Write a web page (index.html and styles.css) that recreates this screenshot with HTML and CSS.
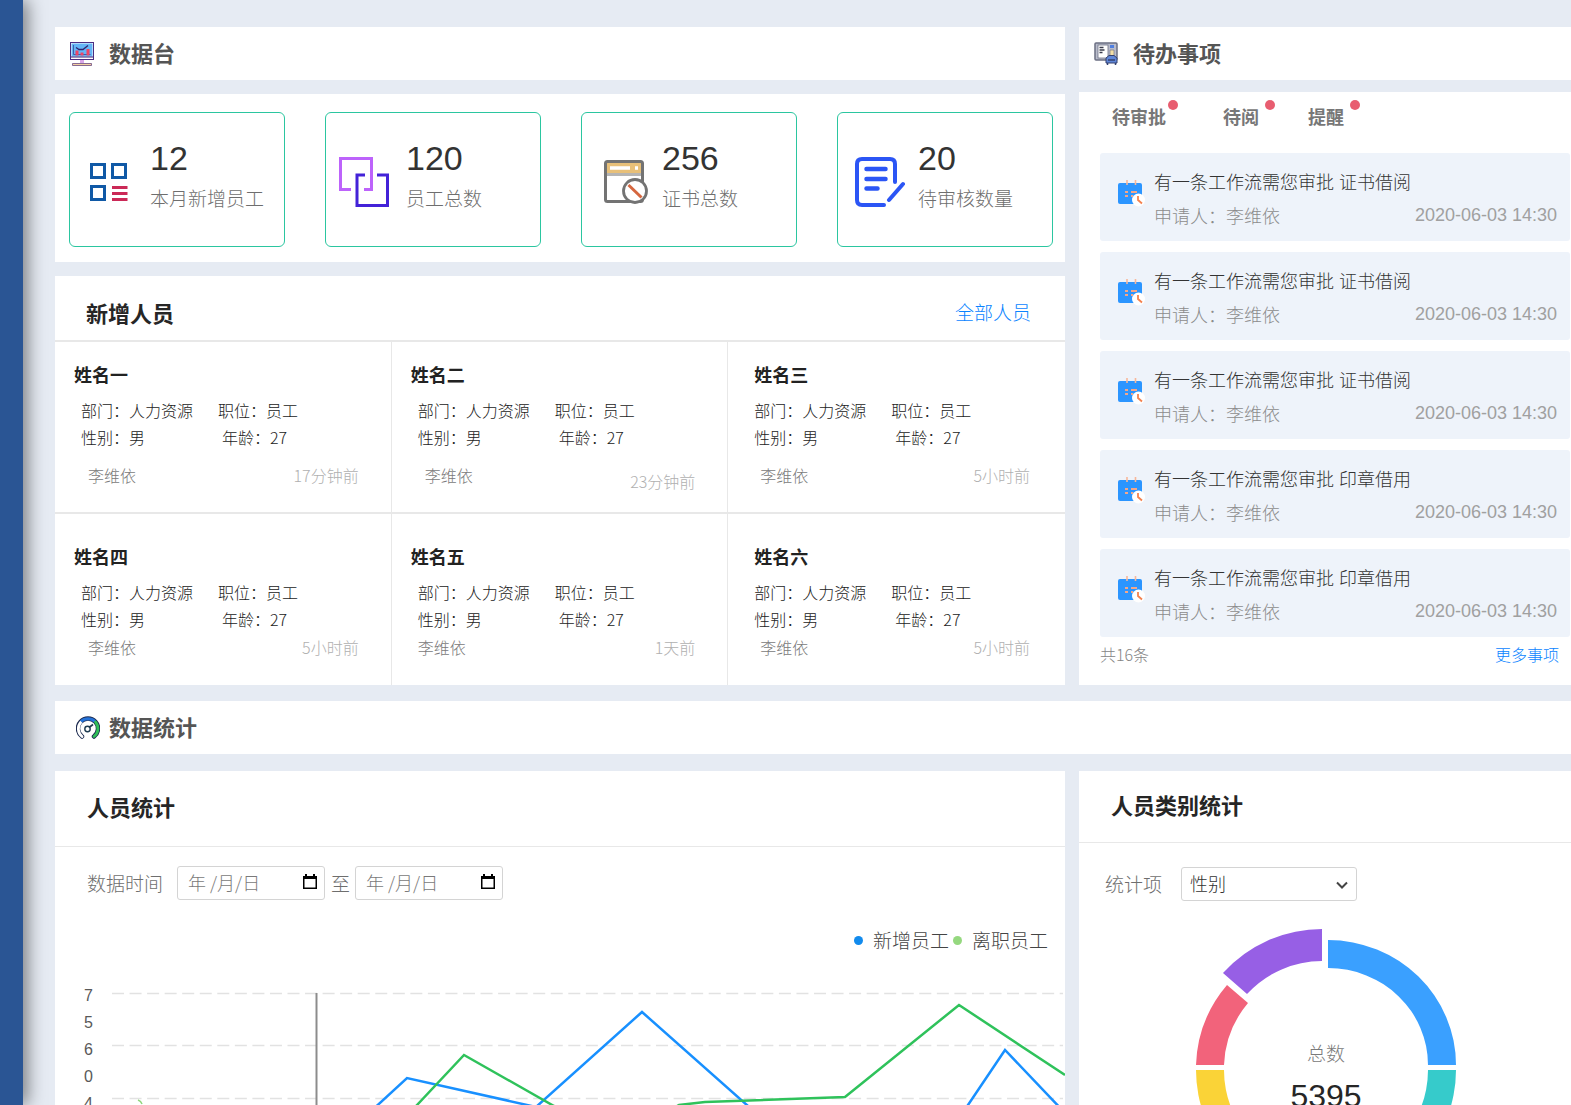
FILE: index.html
```html
<!DOCTYPE html>
<html lang="zh-CN">
<head>
<meta charset="utf-8">
<meta name="viewport" content="width=device-width, initial-scale=1">
<title>数据台</title>
<link rel="stylesheet" href="styles.css">
</head>
<body>
<svg class="defs" aria-hidden="true">
  <symbol id="icon-todo" viewBox="0 0 27 27">
    <rect x="0" y="3" width="24" height="21" rx="2" fill="#2b95ff"/>
    <path d="M9 0v5M17.500 0v5" stroke="#f8b79a" stroke-width="1.600"/>
    <path d="M7 12h3M13 12h6M7 16h3M13 16h2" stroke="#f3a78b" stroke-width="2"/>
    <circle cx="20.500" cy="20" r="6.500" fill="#fff"/>
    <path d="M20 16v4l4 3.500" fill="none" stroke="#f4824f" stroke-width="1.800"/>
  </symbol>
  <symbol id="icon-calendar" viewBox="0 0 14 15">
    <path d="M2 0h2v2h6V0h2v2h2v13H0V2h2z" fill="#000"/>
    <path d="M1.500 5h11v8.500h-11z" fill="#fff"/>
  </symbol>
</svg>
<div class="app">
  <nav class="sidebar" aria-label="主导航"></nav>
  <main class="main">
    <div class="columns">
      <div class="col-left">
        <header class="title-bar">
          <svg width="24" height="24" viewBox="0 0 24 24" aria-hidden="true">
            <rect x=".500" y=".500" width="23" height="17" fill="#fff" stroke="#4a2d82"/>
            <rect x="1.500" y="1.500" width="21" height="13" fill="#64b5f6"/>
            <path d="M1 15h22" stroke="#3b1d73" stroke-width="1"/>
            <path d="M3.500 3v9.500h17" fill="none" stroke="#3f5fa8"/>
            <path d="M5.500 8.500h3v5h-3zM10.500 10.500h3v3h-3zM16.500 7h3v6.500h-3z" fill="#ef4565"/>
            <path d="M6 5.500l3 2h4l5-4" fill="none" stroke="#31216e" stroke-width="1.300"/>
            <path d="M10 18h4v3h-4z" fill="#d9a6e8"/>
            <path d="M2.500 21.500h19v2h-19z" fill="#f3cfa0" stroke="#6b4a80" stroke-width=".800"/>
          </svg>
          <h2>数据台</h2>
        </header>
        <section class="panel stats">
          <article class="stat">
            <div class="stat-icon">
              <svg width="40" height="38" viewBox="0 0 40 38" aria-hidden="true">
                <g fill="none" stroke="#1059a6" stroke-width="3"><path d="M1.500 1.500h13v13h-13zM22.500 1.500h13v13h-13zM1.500 23.500h13v13h-13z"/></g>
                <path d="M22 24.500h15.500M22 30.500h15.500M22 36.500h15.500" stroke="#cb2957" stroke-width="3"/>
              </svg>
            </div>
            <div class="stat-text"><strong class="stat-value">12</strong><p class="stat-label">本月新增员工</p></div>
          </article>
          <article class="stat">
            <div class="stat-icon">
              <svg width="54" height="50" viewBox="0 0 54 50" fill="none" stroke-width="3" aria-hidden="true">
                <path d="M12 32.500H1.500v-31h31v31H25" stroke="#bd63fb"/>
                <path d="M26 18H18v30.500h30.500V18H38" stroke="#4322d8"/>
              </svg>
            </div>
            <div class="stat-text"><strong class="stat-value">120</strong><p class="stat-label">员工总数</p></div>
          </article>
          <article class="stat">
            <div class="stat-icon">
              <svg width="52" height="44" viewBox="-8 0 52 44" aria-hidden="true">
                <rect x="1.500" y="1.500" width="37" height="40" rx="2" fill="#fff"/>
                <path d="M3 3h34v10H3z" fill="#e8c079"/>
                <path d="M3 14.500h34" stroke="#b5b5b5" stroke-width="3"/>
                <path d="M6 8h20M31 8h3" stroke="#fff" stroke-width="3.500"/>
                <rect x="1.500" y="1.500" width="37" height="40" rx="2" fill="none" stroke="#737373" stroke-width="3"/>
                <circle cx="31" cy="31" r="12" fill="#fff"/>
                <circle cx="31" cy="31" r="11.500" fill="#fff" stroke="#737373" stroke-width="2.800"/>
                <path d="M24.500 25l13 12.500" stroke="#d5673f" stroke-width="3"/>
              </svg>
            </div>
            <div class="stat-text"><strong class="stat-value">256</strong><p class="stat-label">证书总数</p></div>
          </article>
          <article class="stat">
            <div class="stat-icon">
              <svg width="54" height="50" viewBox="-4 0 54 50" fill="none" stroke="#2b55f5" stroke-width="4" stroke-linecap="round" aria-hidden="true">
                <path d="M29 48H7q-5 0-5-5V7q0-5 5-5h28q5 0 5 5v18"/>
                <path d="M11.500 12h19M11.500 22h19M11.500 31.500h11" stroke-width="4.500"/>
                <path d="M48 27L34 43"/>
              </svg>
            </div>
            <div class="stat-text"><strong class="stat-value">20</strong><p class="stat-label">待审核数量</p></div>
          </article>
        </section>
        <section class="panel staff">
          <header class="staff-head"><h3>新增人员</h3><a href="#">全部人员</a></header>
          <div class="staff-grid">
            <article class="person">
              <h4>姓名一</h4>
              <div class="facts"><span>部门：人力资源</span><span>职位：员工</span><span>性别：男</span><span class="age">年龄：27</span></div>
              <footer><span>李维依</span><time>17分钟前</time></footer>
            </article>
            <article class="person late">
              <h4>姓名二</h4>
              <div class="facts"><span>部门：人力资源</span><span>职位：员工</span><span>性别：男</span><span class="age">年龄：27</span></div>
              <footer><span>李维依</span><time>23分钟前</time></footer>
            </article>
            <article class="person flush">
              <h4>姓名三</h4>
              <div class="facts"><span>部门：人力资源</span><span>职位：员工</span><span>性别：男</span><span class="age">年龄：27</span></div>
              <footer><span>李维依</span><time>5小时前</time></footer>
            </article>
            <article class="person lower">
              <h4>姓名四</h4>
              <div class="facts"><span>部门：人力资源</span><span>职位：员工</span><span>性别：男</span><span class="age">年龄：27</span></div>
              <footer><span>李维依</span><time>5小时前</time></footer>
            </article>
            <article class="person lower aligned">
              <h4>姓名五</h4>
              <div class="facts"><span>部门：人力资源</span><span>职位：员工</span><span>性别：男</span><span class="age">年龄：27</span></div>
              <footer><span>李维依</span><time>1天前</time></footer>
            </article>
            <article class="person lower flush">
              <h4>姓名六</h4>
              <div class="facts"><span>部门：人力资源</span><span>职位：员工</span><span>性别：男</span><span class="age">年龄：27</span></div>
              <footer><span>李维依</span><time>5小时前</time></footer>
            </article>
          </div>
        </section>
      </div>
      <div class="col-right">
        <header class="title-bar">
          <svg width="24" height="24" viewBox="0 0 24 24" aria-hidden="true">
            <rect x="1" y="1" width="22" height="17" rx="1" fill="#b9bccb" stroke="#6b6f83" stroke-width="1.500"/>
            <rect x="4" y="3" width="10" height="13" fill="#fff" stroke="#6b6f83" stroke-width=".800"/>
            <path d="M5.500 5.500h4M5.500 8h5M5.500 10.500h3" stroke="#3a3c4c" stroke-width="1.300"/>
            <path d="M16 3h4v3h-4z" fill="#4f7fe0"/>
            <path d="M16 8h4v6h-4z" fill="#f3dfa6" stroke="#666a80" stroke-width=".600"/>
            <path d="M12 16l3-2.500h5l3 2.500v5H12z" fill="#5f86d8" stroke="#34416f"/>
            <path d="M13.500 21v2M21.500 21v2M14 18h7" stroke="#34416f" stroke-width="1.500"/>
          </svg>
          <h2>待办事项</h2>
        </header>
        <section class="panel todo">
          <div class="tabs">
            <button type="button">待审批<i></i></button>
            <button type="button">待阅<i></i></button>
            <button type="button">提醒<i></i></button>
          </div>
          <ul class="todo-list">
            <li><svg class="todo-icon" aria-hidden="true"><use href="#icon-todo"/></svg><p><span>有一条工作流需您审批</span><span>证书借阅</span></p><div><span>申请人：李维依</span><time>2020-06-03 14:30</time></div></li>
            <li><svg class="todo-icon" aria-hidden="true"><use href="#icon-todo"/></svg><p><span>有一条工作流需您审批</span><span>证书借阅</span></p><div><span>申请人：李维依</span><time>2020-06-03 14:30</time></div></li>
            <li><svg class="todo-icon" aria-hidden="true"><use href="#icon-todo"/></svg><p><span>有一条工作流需您审批</span><span>证书借阅</span></p><div><span>申请人：李维依</span><time>2020-06-03 14:30</time></div></li>
            <li><svg class="todo-icon" aria-hidden="true"><use href="#icon-todo"/></svg><p><span>有一条工作流需您审批</span><span>印章借用</span></p><div><span>申请人：李维依</span><time>2020-06-03 14:30</time></div></li>
            <li><svg class="todo-icon" aria-hidden="true"><use href="#icon-todo"/></svg><p><span>有一条工作流需您审批</span><span>印章借用</span></p><div><span>申请人：李维依</span><time>2020-06-03 14:30</time></div></li>
          </ul>
          <footer class="todo-foot"><span>共16条</span><a href="#">更多事项</a></footer>
        </section>
      </div>
    </div>

    <header class="title-bar title-bar-wide">
      <svg width="24" height="24" viewBox="0 0 24 24" fill="none" aria-hidden="true">
        <path d="M6 20.500A10 10 0 1 1 18 20.500" stroke="#1d2b50" stroke-width="4.500" stroke-linecap="round"/>
        <path d="M6 20.500A10 10 0 0 1 5 6" stroke="#fff" stroke-width="2.800" stroke-linecap="round"/>
        <path d="M5 5.500A10 10 0 0 1 19 5.500" stroke="#2472d8" stroke-width="3"/>
        <path d="M19.500 6A10 10 0 0 1 18 20.500" stroke="#2fbf57" stroke-width="2.800" stroke-linecap="round"/>
        <circle cx="11.500" cy="13" r="2.700" fill="#fff" stroke="#1d3a50" stroke-width="1.400"/>
        <path d="M13 11.500l4-3" stroke="#1d3a50" stroke-width="1.600"/>
      </svg>
      <h2>数据统计</h2>
    </header>

    <div class="columns columns-fill">
      <section class="panel chart-panel">
        <header class="panel-head panel-head-tall"><h3>人员统计</h3></header>
        <div class="filters">
          <label for="date-from">数据时间</label>
          <span class="date-field"><input id="date-from" type="text" placeholder="年 /月/日"><svg aria-hidden="true"><use href="#icon-calendar"/></svg></span>
          <label for="date-to">至</label>
          <span class="date-field"><input id="date-to" type="text" placeholder="年 /月/日"><svg aria-hidden="true"><use href="#icon-calendar"/></svg></span>
        </div>
        <ul class="legend"><li class="joined">新增员工</li><li class="left">离职员工</li></ul>
        <div class="line-chart">
          <ol class="axis"><li>7</li><li>5</li><li>6</li><li>0</li><li>4</li></ol>
          <svg viewBox="0 0 953 200" fill="none" role="img" aria-label="新增员工与离职员工">
            <g stroke="#e2e2e2" stroke-width="1.500" stroke-dasharray="12 5.550"><path d="M0 11.500h951M0 63.500h951M0 116.500h951"/></g>
            <path d="M204.500 11v189" stroke="#8c8c8c" stroke-width="2"/>
            <path d="M26 118q3 1 4 4" stroke="#8fd67c" stroke-width="1.500"/>
            <g stroke-width="2.500">
              <path d="M256 132L295 96L424 125L530 30L636 124L720 180L810 190L856 123L893 68L953 131" stroke="#1890ff"/>
              <path d="M280 150L305 123L352 73L442 124L520 150L567 123L593 120L733 115L847 23L953 93" stroke="#2fc25b"/>
            </g>
          </svg>
        </div>
      </section>
      <section class="panel">
        <header class="panel-head"><h3>人员类别统计</h3></header>
        <div class="filters filters-category">
          <label for="category">统计项</label>
          <span class="select-field">
            <select id="category"><option>性别</option></select>
            <svg viewBox="0 0 12 8" aria-hidden="true"><path d="M1 1.500l5 5 5-5" fill="none" stroke="#444" stroke-width="2"/></svg>
          </span>
        </div>
        <figure class="donut">
          <svg viewBox="0 0 270 290" aria-hidden="true">
            <path fill="#3aa0ff" d="M138 20A128 125 0 0 1 266 145H238A100 97 0 0 0 138 48Z"/>
            <path fill="#36cbcb" d="M266 150A130 130 0 0 1 138 280V252A102 102 0 0 0 238 150Z"/>
            <path fill="#fad337" d="M6 150A130 130 0 0 0 132 280V252A102 102 0 0 1 34 150Z"/>
            <path fill="#f2637b" d="M6 145A130 130 0 0 1 37 65L58 83A102 102 0 0 0 34 145Z"/>
            <path fill="#975fe5" d="M33 53A134 134 0 0 1 132 9V41A102 102 0 0 0 57 74Z"/>
          </svg>
          <figcaption>总数<strong>5395</strong></figcaption>
        </figure>
      </section>
    </div>
  </main>
</div>
</body>
</html>
```
FILE: styles.css
```css
* {
  box-sizing: border-box;
}

body,
h2,
h3,
h4,
p,
ul,
ol,
figure {
  margin: 0;
}

ul,
ol {
  padding: 0;
  list-style: none;
}

body {
  background: #e6ebf3;
  color: #222;
  font-family: "Noto Sans CJK SC", sans-serif;
  font-size: 16px;
  font-weight: 300;
  line-height: 24px;
}

a {
  color: #0a84ff;
  text-decoration: none;
}

input,
select,
button {
  font: inherit;
}

.defs {
  display: none;
}

.app {
  display: flex;
  height: 100vh;
  overflow: hidden;
}

.sidebar {
  flex: 0 0 23px;
  background: #2a5594;
  box-shadow: 4px 0 18px rgba(0, 0, 0, 0.5);
}

.main {
  display: flex;
  flex: 1;
  flex-direction: column;
  min-width: 0;
  padding: 27px 0 0 32px;
}

.columns {
  display: grid;
  flex-shrink: 0;
  grid-template-columns: minmax(0, 505fr) minmax(0, 246fr);
  column-gap: 14px;
}

.columns-fill {
  flex: 1 0 auto;
}

.col-left,
.col-right {
  display: flex;
  flex-direction: column;
  gap: 14px;
}

.col-right {
  gap: 12px;
}

.panel,
.title-bar {
  background: #fff;
}

/* Section title bars */
.title-bar {
  display: flex;
  flex-shrink: 0;
  align-items: center;
  gap: 15px;
  height: 53px;
  padding-left: 15px;
}

.title-bar-wide {
  gap: 9px;
  margin: 16px 0 17px;
  padding-left: 21px;
}

.title-bar h2 {
  padding-bottom: 3px;
  color: #555;
  font-size: 22px;
  font-weight: 700;
}

h3 {
  color: #262626;
  font-size: 22px;
  font-weight: 700;
}

/* Key figures */
.stats {
  display: grid;
  grid-template-columns: repeat(4, minmax(0, 1fr));
  gap: 40px;
  padding: 18px 12px 15px 14px;
}

.stat {
  display: flex;
  align-items: center;
  min-height: 135px;
  border: 1px solid #2bc6a0;
  border-radius: 6px;
}

.stat-icon {
  display: flex;
  flex: 0 0 80px;
  justify-content: center;
  padding-top: 4px;
}

.stat-text {
  padding-bottom: 3px;
}

.stat-value {
  display: block;
  color: #333;
  font-family: "Liberation Sans", sans-serif;
  font-size: 34px;
  font-weight: 400;
  line-height: 40px;
}

.stat-label {
  color: #6e6e6e;
  font-size: 19px;
  line-height: 40px;
  white-space: nowrap;
}

/* New staff */
.staff-head {
  display: flex;
  align-items: center;
  justify-content: space-between;
  height: 66px;
  padding: 7px 34px 0 31px;
  border-bottom: 2px solid #e8e8e8;
}

.staff-head a {
  font-size: 19px;
}

.staff-grid {
  display: grid;
  grid-template-columns: repeat(3, minmax(0, 1fr));
  grid-template-rows: 172px 171px;
}

.person {
  padding: 20px 32px 0 19px;
  border-right: 1px solid #e8e8e8;
  border-bottom: 2px solid #e8e8e8;
}

.person.lower {
  padding-top: 30px;
  border-bottom: 0;
}

.person.flush {
  padding-right: 35px;
  padding-left: 26px;
  border-right: 0;
}

.person h4 {
  margin-bottom: 11px;
  font-size: 18px;
  font-weight: 700;
}

.facts {
  display: grid;
  grid-template-columns: 137px 1fr;
  padding-left: 7px;
  line-height: 27px;
  white-space: nowrap;
}

.age {
  padding-left: 4px;
}

.person footer {
  display: flex;
  justify-content: space-between;
  margin-top: 12px;
  padding-left: 14px;
  color: #7a7a7a;
}

.person time {
  color: #b0b0b0;
}

.person.lower footer {
  margin-top: 2px;
}

.person.flush .facts {
  padding-left: 0;
}

.person.flush footer {
  padding-left: 6px;
}

.person.aligned footer {
  padding-left: 7px;
}

.person.late footer {
  min-height: 30px;
}

.person.late time {
  align-self: flex-end;
}

/* To-do list */
.todo {
  flex: 1;
  padding: 12px 1px 0 21px;
}

.tabs {
  display: flex;
  padding-left: 12px;
}

.tabs button {
  position: relative;
  margin-right: 57px;
  padding: 0;
  border: 0;
  background: none;
  color: #777;
  font-size: 18px;
  font-weight: 700;
}

.tabs button + button {
  margin-right: 49px;
}

.tabs i {
  position: absolute;
  top: -4px;
  right: -12px;
  width: 10px;
  height: 10px;
  border-radius: 50%;
  background: #e85d70;
}

.tabs button + button i {
  right: -16px;
}

.todo-list {
  display: grid;
  gap: 11px;
  margin-top: 25px;
}

.todo-list li {
  display: grid;
  grid-template-columns: 27px minmax(0, 1fr);
  column-gap: 9px;
  padding: 11px 13px 9px 18px;
  border-radius: 3px;
  background: #eef3fa;
  color: #999;
  font-size: 18px;
  line-height: 34px;
  white-space: nowrap;
}

.todo-icon {
  grid-row: span 2;
  width: 27px;
  height: 27px;
  margin-top: 16px;
}

.todo-list p {
  display: flex;
  gap: 5px;
  color: #333;
}

.todo-list div {
  display: flex;
  justify-content: space-between;
}

.todo-list span {
  white-space: nowrap;
}

.todo-list div span {
  color: #8c8c8c;
}

.todo-list time {
  color: #a0a0a0;
  font-family: "Liberation Sans", sans-serif;
}

.todo-foot {
  display: flex;
  justify-content: space-between;
  padding: 5px 11px 0 0;
  color: #858585;
}

/* Statistics */
.panel-head {
  display: flex;
  align-items: center;
  height: 72px;
  padding: 0 0 6px 32px;
  border-bottom: 1px solid #e8e8e8;
}

.panel-head-tall {
  height: 76px;
}

.filters {
  display: flex;
  align-items: center;
  height: 34px;
  margin-top: 19px;
  padding-left: 32px;
  color: #6e6e6e;
  font-size: 19px;
}

.filters-category {
  margin-top: 24px;
  padding-left: 26px;
}

.date-field,
.select-field {
  position: relative;
  width: 148px;
  height: 34px;
  margin: 0 6px 0 14px;
}

.date-field ~ .date-field {
  margin-left: 5px;
}

.select-field {
  width: 176px;
  margin-left: 19px;
}

.date-field input,
.select-field select {
  width: 100%;
  height: 100%;
  padding: 0 30px 3px 10px;
  border: 1px solid #d4d4d4;
  border-radius: 3px;
  background: #fff;
  color: #333;
  font-size: 18px;
  appearance: none;
}

.select-field select {
  padding-left: 8px;
}

.date-field input::placeholder {
  color: #7a7a7a;
  opacity: 1;
}

.date-field svg {
  position: absolute;
  top: 8px;
  right: 8px;
  width: 14px;
  height: 15px;
}

.select-field svg {
  position: absolute;
  top: 14px;
  right: 9px;
  width: 12px;
  height: 8px;
  pointer-events: none;
}

.legend {
  display: flex;
  justify-content: flex-end;
  margin-top: 28px;
  padding-right: 17px;
  color: #444;
  font-size: 19px;
}

.legend li {
  display: flex;
  align-items: center;
  gap: 10px;
  margin-left: 4px;
}

.legend li::before {
  width: 9px;
  height: 9px;
  border-radius: 50%;
  background: #128bed;
  content: "";
}

.legend .left::before {
  background: #95d87f;
}

.line-chart {
  display: flex;
  align-items: flex-start;
  margin-top: 30px;
  padding-left: 29px;
}

.axis {
  flex: 0 0 28px;
  color: #595959;
  font-family: "Liberation Sans", sans-serif;
  line-height: 27px;
}

.line-chart svg {
  flex: 1;
  min-width: 0;
}

.donut {
  display: grid;
  grid-template-columns: 270px;
  justify-content: center;
  margin-top: 19px;
}

.donut svg,
.donut figcaption {
  grid-area: 1 / 1;
}

.donut figcaption {
  padding: 113px 0 0 2px;
  color: #7a7a7a;
  font-size: 19px;
  line-height: 40px;
  text-align: center;
}

.donut strong {
  display: block;
  color: #262626;
  font-family: "Liberation Sans", sans-serif;
  font-size: 32px;
  font-weight: 400;
  line-height: 46px;
}
```
